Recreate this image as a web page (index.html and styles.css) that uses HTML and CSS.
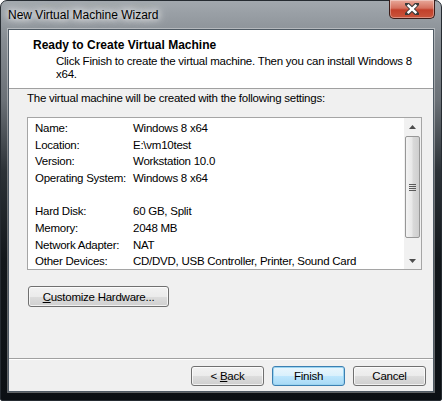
FILE: index.html
```html
<!DOCTYPE html>
<html lang="en">
<head>
  <meta charset="UTF-8" />
  <title>New Virtual Machine Wizard</title>
  <link rel="stylesheet" href="styles.css">
</head>
<body>
  <div class="window">
    <!-- Title bar -->
    <div class="titlebar">
      <span class="title">New Virtual Machine Wizard</span>
      <button class="close" aria-label="Close">
        <svg width="14" height="12" viewBox="0 0 14 12">
          <path d="M2 1 L12 11 M12 1 L2 11" stroke="#3a3a3a" stroke-width="4.4" stroke-linecap="square"/>
          <path d="M2.6 1.8 L11.4 10.2 M11.4 1.8 L2.6 10.2" stroke="#ffffff" stroke-width="2.4"/>
        </svg>
      </button>
    </div>

    <div class="client">
      <div class="header">
        <div class="header-title">Ready to Create Virtual Machine</div>
        <div class="header-sub">Click Finish to create the virtual machine. Then you can install Windows 8 x64.</div>
      </div>

      <div class="content">
        <p class="intro">The virtual machine will be created with the following settings:</p>

        <div class="listbox">
          <div class="rows">
            <div class="row"><span class="label">Name:</span><span>Windows 8 x64</span></div>
            <div class="row"><span class="label">Location:</span><span>E:\vm10test</span></div>
            <div class="row"><span class="label">Version:</span><span>Workstation 10.0</span></div>
            <div class="row"><span class="label">Operating System:</span><span>Windows 8 x64</span></div>
            <div class="row"></div>
            <div class="row"><span class="label">Hard Disk:</span><span>60 GB, Split</span></div>
            <div class="row"><span class="label">Memory:</span><span>2048 MB</span></div>
            <div class="row"><span class="label">Network Adapter:</span><span>NAT</span></div>
            <div class="row"><span class="label">Other Devices:</span><span>CD/DVD, USB Controller, Printer, Sound Card</span></div>
          </div>

          <div class="scrollbar">
            <div class="arrow">
              <svg width="7" height="4" viewBox="0 0 7 4"><path d="M0 4 L3.5 0 L7 4 Z" fill="#4d4d4d"/></svg>
            </div>
            <div class="thumb">
              <span class="grip"></span>
            </div>
            <div class="track"></div>
            <div class="arrow">
              <svg width="7" height="4" viewBox="0 0 7 4"><path d="M0 0 L3.5 4 L7 0 Z" fill="#4d4d4d"/></svg>
            </div>
          </div>
        </div>

        <button class="btn wide"><u>C</u>ustomize Hardware...</button>
      </div>

      <div class="footer">
        <button class="btn">&lt; <u>B</u>ack</button>
        <button class="btn default">Finish</button>
        <button class="btn">Cancel</button>
      </div>
    </div>
  </div>
</body>
</html>
```

FILE: styles.css
```css
body {
  margin: 0;
  background: #ffffff;
  font-family: "Liberation Sans", Arial, sans-serif;
  font-size: 11.5px;
  letter-spacing: -0.25px;
  color: #000;
}
.window {
  width: 442px;
  height: 401px;
  box-sizing: border-box;
  padding: 0 7px 8px 7px;
  border: 1px solid #252b31;
  border-radius: 7px 7px 2px 2px;
  background: linear-gradient(to bottom, #a2a8ae 0px, #868c92 40px, #6a7076 100px, #2c3237 170px, #12171b 260px, #0c1014 100%);
  display: flex;
  flex-direction: column;
}
.titlebar {
  height: 28px;
  display: flex;
  align-items: flex-start;
  justify-content: space-between;
}
.title {
  margin-top: 7px;
  font-size: 12px;
  letter-spacing: 0;
  color: #000;
  text-shadow: 0 0 6px #ffffff, 0 0 10px #ffffff, 0 0 14px rgba(255,255,255,0.8);
}
.close {
  width: 46px;
  height: 19px;
  margin-top: -1px;
  margin-right: -1px;
  padding: 0;
  border: 1px solid #3b1c18;
  border-top: none;
  border-radius: 0 0 5px 5px;
  background: linear-gradient(to bottom, #e8a99a 0%, #d5715e 45%, #c2402a 55%, #c9553c 100%);
  box-shadow: inset 0 0 0 1px rgba(255,255,255,0.35);
  display: flex;
  align-items: center;
  justify-content: center;
}
.client {
  flex: 1;
  display: flex;
  flex-direction: column;
  background: #f0f0f0;
  border: 1px solid #4f5a64;
  box-shadow: 0 0 0 1px rgba(255,255,255,0.35);
}
.header {
  height: 59px;
  box-sizing: border-box;
  background: #ffffff;
  border-bottom: 1px solid #a0a0a0;
  padding: 7px 0 0 24px;
}
.header-title {
  font-weight: bold;
  font-size: 12px;
  letter-spacing: 0;
  line-height: 16px;
}
.header-sub {
  margin-left: 23px;
  width: 362px;
  line-height: 13px;
  margin-top: 2px;
}
.content {
  flex: 1;
  padding: 2px 11px 0 18px;
}
.intro {
  margin: 0 0 11px 0;
  line-height: 15px;
}
.listbox {
  height: 153px;
  box-sizing: border-box;
  border: 1px solid #a5a5a5;
  background: #ffffff;
  display: flex;
  margin-bottom: 16px;
}
.rows {
  flex: 1;
  padding: 2px 0 0 7px;
  white-space: nowrap;
}
.row {
  display: flex;
  height: 16.67px;
  line-height: 16.67px;
}
.label {
  width: 98px;
  flex-shrink: 0;
}
.scrollbar {
  width: 17px;
  display: flex;
  flex-direction: column;
  background: #f1f1f1;
}
.arrow {
  height: 17px;
  display: flex;
  align-items: center;
  justify-content: center;
}
.thumb {
  height: 102px;
  margin: 1px 1px 0 1px;
  box-sizing: border-box;
  border: 1px solid #979797;
  border-radius: 2px;
  background: linear-gradient(to right, #f3f3f3 0%, #e8e8e8 45%, #d9d9d9 55%, #cfcfcf 100%);
  display: flex;
  align-items: center;
  justify-content: center;
}
.grip {
  width: 7px;
  height: 7px;
  background: repeating-linear-gradient(to bottom, #5a5a5a 0 1px, transparent 1px 2px);
}
.track {
  flex: 1;
}
.btn {
  height: 21px;
  padding: 0;
  font-family: inherit;
  font-size: 11.5px;
  letter-spacing: -0.25px;
  color: #000;
  border: 1px solid #707070;
  border-radius: 3px;
  background: linear-gradient(to bottom, #f2f2f2 0%, #ebebeb 50%, #dddddd 50%, #cfcfcf 100%);
  box-shadow: inset 0 0 0 1px rgba(255,255,255,0.7);
}
.btn u {
  text-decoration: underline;
}
.wide {
  width: 141px;
  margin-left: 1px;
}
.footer {
  height: 33px;
  box-sizing: border-box;
  border-top: 1px solid #a0a0a0;
  box-shadow: inset 0 1px 0 #ffffff;
  display: flex;
  justify-content: flex-end;
  align-items: flex-start;
  gap: 8px;
  padding: 7px 7px 0 0;
}
.footer .btn {
  width: 73px;
  height: 20px;
}
.default {
  border-color: #3c7fb1;
  box-shadow: inset 0 0 0 1px #9ad4f1;
  background: linear-gradient(to bottom, #eaf6fd 0%, #d9f0fc 50%, #bee6fd 50%, #a7d9f5 100%);
}
```
